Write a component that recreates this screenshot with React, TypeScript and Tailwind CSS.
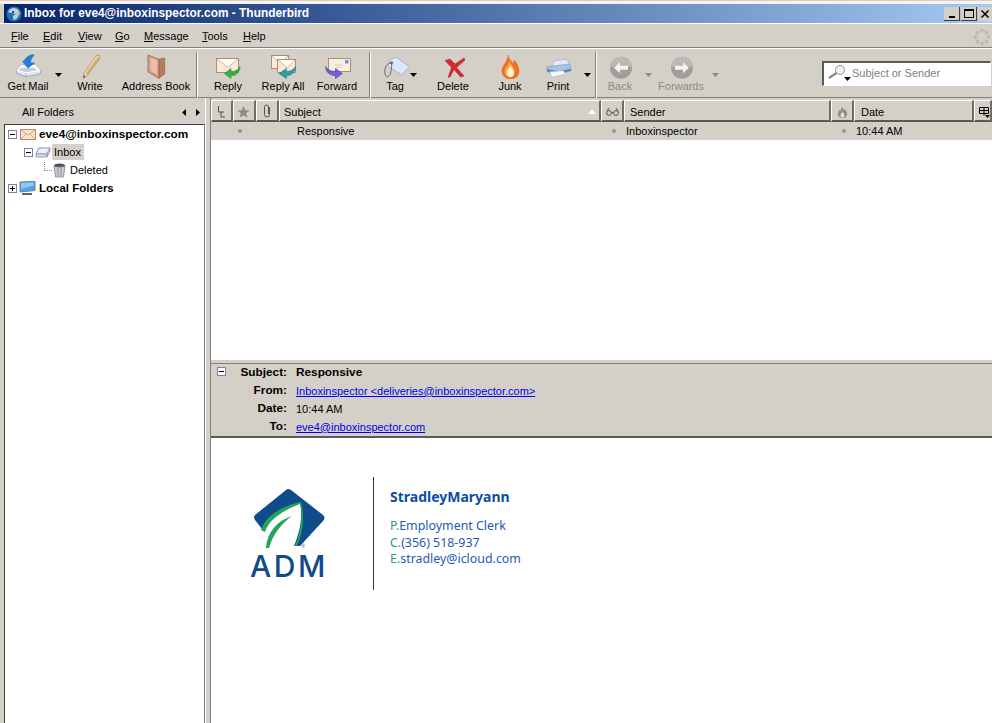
import React from "react";

const Caret = ({ color = "#000" }: { color?: string }) => (
  <svg width="7" height="4" viewBox="0 0 7 4">
    <path d="M0 0h7L3.500 4z" fill={color} />
  </svg>
);

const GetMailIcon = () => (
  <svg width="30" height="27" viewBox="0 0 30 27">
    <path d="M3.300 18.700L8.300 13h14.400l5 5.700-.7 3.300-14.300 2.700-9-3.400z" fill="#dfe6ef" stroke="#8b9ab0" strokeWidth="0.8" />
    <path d="M3.300 18.700l9.500 2.800 14.900-2.800-5-5.700H8.300z" fill="#fafbfc" />
    <path d="M8 16h14l2 2.300-11 2-7-2z" fill="#c3cedb" />
    <path d="M12.800 21.500v3.200" stroke="#8b9ab0" strokeWidth="0.8" />
    <path d="M20.500 2.500C16 3 12.500 5.500 11 9.200H9.300l5.700 7.100 6.700-5.600H17.300c.4-3 2-5.700 3.700-7.200z" fill="#1f7fe0" stroke="#1a62b8" strokeWidth="0.5" />
  </svg>
);

const WriteIcon = () => (
  <svg width="22" height="27" viewBox="0 0 22 27">
    <path d="M17.500 3.500L20.500 3l.5 3.500L8.500 23l-4.200 3.300.7-5.300z" fill="#ecd9a8" stroke="#a08b5e" strokeWidth="0.7" />
    <path d="M19 5L7 21.500l1.500 1.300L20.800 6z" fill="#c9a96a" />
    <path d="M4.300 26.300l.4-3 2 1.300z" fill="#5c5348" />
  </svg>
);

const BookIcon = () => (
  <svg width="20" height="27" viewBox="0 0 20 27">
    <path d="M13 7l5.700-1v16l-5.700 4.300z" fill="#b77a63" stroke="#94604b" strokeWidth="0.6" />
    <path d="M2 3l11 4.300v19L4.700 21.500 2 20z" fill="#d79d84" stroke="#94604b" strokeWidth="0.7" />
    <path d="M4.500 5.500l6.500 2.800v14l-6.500-3.500z" fill="#eabfa8" />
  </svg>
);

const Envelope = ({ x, y, w, h }: { x: number; y: number; w: number; h: number }) => (
  <g>
    <rect x={x + 0.5} y={y + 0.5} width={w} height={h} fill="#f8ecd9" stroke="#b08d6e" />
    <path d={`M${x + 1} ${y + 1}l${w / 2} ${h * 0.6} ${w / 2 - 1} ${-h * 0.6}`} fill="#fffdf8" stroke="#cfb49a" />
  </g>
);

const ReplyIcon = () => (
  <svg width="26" height="27" viewBox="0 0 26 27">
    <Envelope x={1} y={6} w={22} h={14} />
    <path d="M9.500 21.500l6.500-5v3c4 0 7-1.500 9-5 0 5.500-4 9.500-9 9v3z" fill="#3cab45" stroke="#2a8a33" strokeWidth="0.6" />
  </svg>
);

const ReplyAllIcon = () => (
  <svg width="26" height="27" viewBox="0 0 26 27">
    <Envelope x={1} y={3} w={17} h={13} />
    <Envelope x={7} y={7} w={18} h={13} />
    <path d="M9 21.500l7.500-5v3c4 0 7-1.500 9-5 0 5.500-4 9.500-9 9v3z" fill="#2b9ea8" stroke="#1f7c85" strokeWidth="0.6" />
  </svg>
);

const ForwardIcon = () => (
  <svg width="28" height="27" viewBox="0 0 28 27">
    <rect x="5.500" y="6.500" width="22" height="13" fill="#f9f0e1" stroke="#b08d6e" />
    <rect x="22" y="8" width="3.500" height="3.500" fill="#6f8fe0" />
    <path d="M12 13h8M13 15.500h5" stroke="#d9cab4" />
    <path d="M19.500 21.500l-7-5v3c-4 0-7.500-1.500-10-5 0 5.500 5 9.500 10 9v3z" fill="#7560cf" stroke="#52419f" strokeWidth="0.6" />
  </svg>
);

const TagIcon = () => (
  <svg width="28" height="27" viewBox="0 0 28 27">
    <path d="M9 7.300l6.700-2 12.300 9.400-7.300 8.300L7.300 14.700z" fill="#dbe7fa" stroke="#a3b5d2" />
    <circle cx="10.700" cy="10.700" r="1.500" fill="#6f7f99" />
    <path d="M10.700 10.700C6 11 3.500 15 3.800 20c.2 4 2 5.500 3.500 4.500 2.500-1.700 3.500-7 3.400-13.500" fill="none" stroke="#5b5b5b" strokeWidth="0.9" />
  </svg>
);

const DeleteIcon = () => (
  <svg width="24" height="27" viewBox="0 0 24 27">
    <path d="M4 8.500L9 7l5 5 9-6 1 2-8.500 7.500L23 24l-3.500 1-6.500-7.500L9 25l-2 .500 3.500-10z" fill="#d8282d" stroke="#b11a20" strokeWidth="0.5" />
  </svg>
);

const JunkIcon = () => (
  <svg width="20" height="27" viewBox="0 0 20 27">
    <path d="M8 3c1 5 4 6 5 9 1-1 1-3 1-4 3 3 5 7 5 11 0 5-4 8-8.500 8C6 27 2 24 2 19 2 13 8 10 8 3z" fill="#ef6f2a" stroke="#dd5a22" strokeWidth="0.5" />
    <path d="M9.500 8c.5 4 4 6 5 9 1 4-1 8.500-4 8.500S4.500 23 4.500 19.500C4.500 15 9 13 9.500 8z" fill="#fba43c" />
    <path d="M10.500 13c.5 3 3 4.500 3.500 7 .5 3-1.500 5-3.500 5s-4-1.500-4-4.500C6.500 17.500 10 16 10.500 13z" fill="#fff0cf" />
  </svg>
);

const PrintIcon = () => (
  <svg width="28" height="27" viewBox="0 0 28 27">
    <path d="M10.300 8.700l12.400-1.400 3.300 5.700-18.300 1.700z" fill="#e3ecf6" stroke="#8ea2ba" strokeWidth="0.6" />
    <path d="M2.700 14.700L26 12l1 6.700L15 22l-11.700-2.300z" fill="#a9c3e2" stroke="#7e98b8" strokeWidth="0.6" />
    <path d="M3 17l12 2.500L27 16.500v2.200L15 22l-11.700-2.300z" fill="#5d86bb" />
    <path d="M6 19.700l13.300-1 2.400 3.300-14 3.300z" fill="#f6f9fc" stroke="#a9b8c9" strokeWidth="0.6" />
  </svg>
);

const NavIcon = ({ dir }: { dir: "back" | "forward" }) => (
  <svg width="24" height="27" viewBox="0 0 24 27">
    <circle cx="13" cy="15.700" r="11" fill="#a09e9a" />
    <path d="M2 15.700a11 11 0 0 1 22 0c-4-3-18-3-22 0z" fill="#bbb9b5" />
    <path
      d={dir === "back" ? "M6 15.700l6-5.500v3.500h8v4h-8v3.500z" : "M20 15.700l-6-5.500v3.500H6v4h8v3.500z"}
      fill="#f3f2ef"
    />
  </svg>
);

const ToolButton = ({
  label,
  width,
  disabled,
  children,
}: {
  label: string;
  width: string;
  disabled?: boolean;
  children: React.ReactNode;
}) => (
  <div className={`flex flex-col items-center shrink-0 ${width}`}>
    <div className="h-[27px] mb-[1px] flex items-center justify-center">{children}</div>
    <span className={`leading-[13px] whitespace-nowrap ${disabled ? "text-[#8c8a85]" : "text-black"}`}>{label}</span>
  </div>
);

const ToolCaret = ({ width, color }: { width: string; color?: string }) => (
  <div className={`flex justify-center pt-[21px] h-full shrink-0 ${width}`}>
    <div>
      <Caret color={color} />
    </div>
  </div>
);

const ToolSep = () => <div className="h-[46px] w-[2px] shrink-0 border-l border-[#808080] bg-white self-center" />;

const TreeToggle = ({ plus }: { plus?: boolean }) => (
  <svg width="9" height="9" viewBox="0 0 9 9" className="shrink-0">
    <rect x="0.5" y="0.5" width="8" height="8" fill="#fff" stroke="#7f7fb0" />
    <path d="M2 4.500h5" stroke="#000" />
    {plus && <path d="M4.500 2v5" stroke="#000" />}
  </svg>
);

const HeaderCell = ({ width, children }: { width: string; children?: React.ReactNode }) => (
  <div className={`h-[22px] pt-[3px] flex items-center shrink-0 border-t border-l border-white border-r-2 border-b-2 border-r-[#6f6d68] border-b-[#5c5a56] ${width}`}>
    {children}
  </div>
);

function Dot() {
  return <div className="w-[4px] h-[4px] rounded-full bg-[#9a9892]" />;
}

export default function App() {
  return (
    <div
      className="w-[992px] h-[723px] overflow-hidden flex flex-col bg-[#d4d0c8] text-[11px] text-black"
      style={{ fontFamily: '"Liberation Sans", Tahoma, sans-serif' }}
    >
      {/* title bar */}
      <div className="h-[4px] shrink-0 border-t border-[#d4d0c8] bg-[#f4f3f0]" />
      <div className="ml-[4px] h-[19px] shrink-0 flex items-center bg-gradient-to-r from-[#0a246a] to-[#a6caf0]">
        <svg width="16" height="16" viewBox="0 0 16 16" className="ml-[2px] shrink-0">
          <circle cx="8" cy="8" r="7.500" fill="#2a6fb0" />
          <path d="M2 6c2-5 9-5 11-1 1 3-1 8-5 9-2-3-1-5 2-6-3-1-6-1-8-2z" fill="#b9cfe4" />
          <circle cx="7" cy="6" r="1" fill="#10253f" />
          <path d="M11 6l4 1-3 2z" fill="#f0c040" />
        </svg>
        <span className="ml-[2px] text-white font-bold text-[11.900px] whitespace-nowrap">Inbox for eve4@inboxinspector.com - Thunderbird</span>
        <div className="ml-auto flex items-center gap-[1px]">
          <div className="w-[16px] h-[14px] bg-[#d4d0c8] border-r border-b border-[#404040] flex items-end justify-center pb-[2px]">
            <div className="w-[6px] h-[2px] bg-black" />
          </div>
          <div className="w-[16px] h-[14px] bg-[#d4d0c8] border-r border-b border-[#404040] flex items-center justify-center">
            <div className="w-[10px] h-[9px] border border-t-2 border-black" />
          </div>
          <div className="w-[14px] h-[14px] bg-[#d4d0c8] flex items-center justify-center">
            <svg width="8" height="8" viewBox="0 0 8 8">
              <path d="M0.500 0.500l7 7M7.500 0.500l-7 7" stroke="#000" strokeWidth="1.500" />
            </svg>
          </div>
        </div>
      </div>
      <div className="h-[1px] shrink-0 bg-white" />

      {/* menu bar */}
      <div className="h-[24px] shrink-0 flex items-center pl-[11px] pt-[2px] border-b border-[#808080]">
        <span className="w-[32px]"><u>F</u>ile</span>
        <span className="w-[35px]"><u>E</u>dit</span>
        <span className="w-[37px]"><u>V</u>iew</span>
        <span className="w-[29px]"><u>G</u>o</span>
        <span className="w-[58px]"><u>M</u>essage</span>
        <span className="w-[41px]"><u>T</u>ools</span>
        <span><u>H</u>elp</span>
        <svg width="18" height="18" viewBox="0 0 18 18" className="ml-auto mr-[1px]" fill="#bdbab3">
          <circle cx="9" cy="2.500" r="2" />
          <circle cx="13.600" cy="4.400" r="2" />
          <circle cx="15.500" cy="9" r="2" />
          <circle cx="13.600" cy="13.600" r="2" />
          <circle cx="9" cy="15.500" r="2" />
          <circle cx="4.400" cy="13.600" r="2" />
          <circle cx="2.500" cy="9" r="2" />
          <circle cx="4.400" cy="4.400" r="2" />
        </svg>
      </div>

      {/* toolbar */}
      <div className="h-[50px] shrink-0 flex items-start pl-[4px] border-t border-white border-b border-b-[#808080] pt-[3px]">
        <ToolButton label="Get Mail" width="w-[48px]"><GetMailIcon /></ToolButton>
        <ToolCaret width="w-[12px]" />
        <ToolButton label="Write" width="w-[52px]"><WriteIcon /></ToolButton>
        <ToolButton label="Address Book" width="w-[80px]"><BookIcon /></ToolButton>
        <ToolSep />
        <ToolButton label="Reply" width="w-[60px]"><ReplyIcon /></ToolButton>
        <ToolButton label="Reply All" width="w-[50px]"><ReplyAllIcon /></ToolButton>
        <ToolButton label="Forward" width="w-[58px]"><ForwardIcon /></ToolButton>
        <div className="w-[3px] shrink-0" />
        <ToolSep />
        <div className="relative">
          <ToolButton label="Tag" width="w-[48px]"><TagIcon /></ToolButton>
          <div className="absolute left-[39px] top-[21px]"><Caret /></div>
        </div>
        <ToolButton label="Delete" width="w-[68px]"><DeleteIcon /></ToolButton>
        <ToolButton label="Junk" width="w-[46px]"><JunkIcon /></ToolButton>
        <ToolButton label="Print" width="w-[50px]"><PrintIcon /></ToolButton>
        <ToolCaret width="w-[9px]" />
        <div className="w-[3px] shrink-0" />
        <ToolSep />
        <ToolButton label="Back" width="w-[46px]" disabled><NavIcon dir="back" /></ToolButton>
        <ToolCaret width="w-[10px]" color="#8c8a85" />
        <ToolButton label="Forwards" width="w-[56px]" disabled><NavIcon dir="forward" /></ToolButton>
        <ToolCaret width="w-[12px]" color="#8c8a85" />
        <div className="ml-auto mt-[9px] mr-[1px] w-[169px] h-[25px] pb-[2px] bg-white flex items-center border-t-2 border-l-2 border-t-[#5a5a5a] border-l-[#5a5a5a] border-b border-r border-b-white border-r-white">
          <div className="relative ml-[3px] w-[25px] h-[18px] shrink-0">
            <svg width="20" height="16" viewBox="0 0 20 16">
              <circle cx="13" cy="6" r="4.500" fill="#eef3f8" stroke="#8b95a1" />
              <path d="M9.500 9L2 14" stroke="#8f8b85" strokeWidth="2.500" />
            </svg>
            <div className="absolute left-[17px] top-[13px]"><Caret /></div>
          </div>
          <span className="text-[#7d7d7d] whitespace-nowrap">Subject or Sender</span>
        </div>
      </div>

      {/* main area */}
      <div className="flex-1 flex min-h-0">
        {/* folder pane */}
        <div className="w-[205px] shrink-0 flex flex-col">
          <div className="h-[26px] shrink-0 flex items-center pl-[22px] pr-[5px] pt-[2px]">
            <span>All Folders</span>
            <svg width="18" height="7" viewBox="0 0 18 7" className="ml-auto">
              <path d="M0 3.500L4 0v7zM18 3.500L14 0v7z" fill="#000" />
            </svg>
          </div>
          <div className="ml-[4px] flex-1 bg-white border-t border-l border-[#404040] border-r border-r-[#808080]">
            <div className="h-[18px] flex items-center pl-[3px]">
              <TreeToggle />
              <svg width="16" height="11" viewBox="0 0 16 11" className="ml-[3px] shrink-0">
                <rect x="0.500" y="0.500" width="15" height="10" fill="#f7e3d2" stroke="#c08a68" />
                <path d="M1 1l7 5 7-5M1 10l5-5M15 10l-5-5" fill="none" stroke="#d2a283" />
              </svg>
              <span className="ml-[3px] pt-[1px] font-bold text-[11.800px] whitespace-nowrap">eve4@inboxinspector.com</span>
            </div>
            <div className="h-[18px] flex items-center pl-[19px]">
              <TreeToggle />
              <svg width="16" height="11" viewBox="0 0 16 11" className="ml-[2px] shrink-0">
                <path d="M4 1h11l-3 6H1z" fill="#eef2f7" stroke="#8595ad" />
                <path d="M1 7h11v3H1zM12 7l3-6v3l-3 6z" fill="#d6deea" stroke="#8595ad" strokeWidth="0.8" />
              </svg>
              <span className="ml-[1px] bg-[#d4d0c8] w-[32px] pl-[2px] h-[16px] leading-[16px]">Inbox</span>
            </div>
            <div className="h-[18px] flex items-center pl-[39px]">
              <div className="w-[8px] h-[9px] mb-[8px] border-l border-b border-dotted border-[#808080] shrink-0" />
              <svg width="13" height="15" viewBox="0 0 13 15" className="ml-[1px] shrink-0">
                <ellipse cx="6.500" cy="2.500" rx="5.500" ry="2" fill="#555" />
                <path d="M1 3l1.500 11h8L12 3c-2 1.500-9 1.500-11 0z" fill="#c9cdd2" stroke="#70757c" strokeWidth="0.7" />
                <path d="M5 5v8M8 5v8" stroke="#8d9298" />
              </svg>
              <span className="ml-[4px]">Deleted</span>
            </div>
            <div className="h-[18px] flex items-center pl-[3px]">
              <TreeToggle plus />
              <svg width="17" height="15" viewBox="0 0 17 15" className="ml-[2px] shrink-0">
                <path d="M1 1l15-0.500v9L1 11z" fill="#4aa5ec" stroke="#6c8299" />
                <path d="M2 2l13-.500v3L2 8z" fill="#8cc8f2" />
                <path d="M3 12h10v2H3z" fill="#5b6570" />
              </svg>
              <span className="ml-[3px] pt-[1px] font-bold text-[11.500px] whitespace-nowrap">Local Folders</span>
            </div>
          </div>
        </div>

        {/* splitter */}
        <div className="w-[6px] shrink-0 border-l border-white border-r border-r-[#808080]" />

        {/* right pane */}
        <div className="flex-1 min-w-0 flex flex-col">
          <div className="flex pt-[2px] shrink-0">
            <HeaderCell width="w-[22px]">
              <svg width="8" height="12" viewBox="0 0 8 12" className="ml-[5px]">
                <path d="M1.500 0v6h2.500v5h4M4 6h3" fill="none" stroke="#55534e" />
              </svg>
            </HeaderCell>
            <HeaderCell width="w-[23px]">
              <svg width="13" height="12" viewBox="0 0 13 12" className="ml-[3px]">
                <path d="M6.500 0l1.700 4.200 4.500.3-3.500 2.800 1.200 4.400-3.900-2.500-3.900 2.500 1.200-4.400L.3 4.500l4.500-.3z" fill="#8f8d88" />
              </svg>
            </HeaderCell>
            <HeaderCell width="w-[23px]">
              <svg width="8" height="14" viewBox="0 0 8 14" className="ml-[6px] -mt-[2px]">
                <path d="M6.500 3v7.500a2.500 2.500 0 0 1-5 0V3a2 2 0 0 1 4 0v7" fill="none" stroke="#55534e" />
              </svg>
            </HeaderCell>
            <HeaderCell width="w-[322px]">
              <span className="ml-[4px]">Subject</span>
              <svg width="8" height="5" viewBox="0 0 8 5" className="ml-auto mr-[3px] -mt-[2px]">
                <path d="M0 5l4-5 4 5z" fill="#fff" />
              </svg>
            </HeaderCell>
            <HeaderCell width="w-[23px]">
              <svg width="13" height="8" viewBox="0 0 13 8" className="ml-[4px]">
                <circle cx="3" cy="5" r="2.400" fill="none" stroke="#55534e" />
                <circle cx="10" cy="5" r="2.400" fill="none" stroke="#55534e" />
                <path d="M5.400 4.500h2.200M1 3l2-3M12 3l-2-3" fill="none" stroke="#55534e" />
              </svg>
            </HeaderCell>
            <HeaderCell width="w-[207px]"><span className="ml-[5px]">Sender</span></HeaderCell>
            <HeaderCell width="w-[23px]">
              <svg width="9" height="12" viewBox="0 0 9 12" className="ml-[6px] -mt-[1px]">
                <path d="M4 0c0 2 1 2 2 4l1-1c1 2 2 3 2 5 0 3-2 4-4.500 4S0 11 0 8c0-2 1-3 1.500-4l1 1z" fill="#8f8d88" />
                <path d="M4.500 5c0 2 2 2.500 2 4.500 0 1.500-1 2-2 2s-2-.5-2-2c0-2 2-2.500 2-4.500z" fill="#e4e2dc" />
              </svg>
            </HeaderCell>
            <HeaderCell width="w-[120px]"><span className="ml-[6px]">Date</span></HeaderCell>
            <HeaderCell width="w-[18px]">
              <svg width="11" height="11" viewBox="0 0 11 11" className="ml-[4px]">
                <path d="M0.500 0.500h9v6h-9zM0.500 3.500h9M5 0.500v8" fill="none" stroke="#000" />
                <path d="M6 8h5l-2.500 3z" fill="#000" />
              </svg>
            </HeaderCell>
          </div>
          <div className="h-[18px] shrink-0 flex items-center bg-[#d4d0c8]">
            <div className="w-[86px] shrink-0 flex justify-end pr-[55px]"><Dot /></div>
            <span className="w-[315px] shrink-0">Responsive</span>
            <div className="w-[14px] shrink-0"><Dot /></div>
            <span className="w-[216px] shrink-0">Inboxinspector</span>
            <div className="w-[14px] shrink-0"><Dot /></div>
            <span>10:44 AM</span>
          </div>
          <div className="flex-1 bg-white min-h-0" />
          <div className="h-[5px] shrink-0 border-t border-white border-b border-b-[#808080]" />
          <div className="h-[74px] shrink-0 border-b-2 border-[#5c5a56]">
            <div className="grid grid-cols-[76px_1fr] gap-x-[9px] auto-rows-[18px] items-center">
              <div className="relative text-right font-bold text-[11.800px]">
                <div className="absolute left-[6px] top-[3px]"><TreeToggle /></div>
                Subject:
              </div>
              <div className="font-bold text-[11.800px]">Responsive</div>
              <div className="text-right font-bold text-[11.800px]">From:</div>
              <a className="text-[#0000ee] underline whitespace-pre">Inboxinspector &lt;deliveries@inboxinspector.com&gt;</a>
              <div className="text-right font-bold text-[11.800px]">Date:</div>
              <div>10:44 AM</div>
              <div className="text-right font-bold text-[11.800px]">To:</div>
              <a className="text-[#0000ee] underline">eve4@inboxinspector.com</a>
            </div>
          </div>

          {/* message body */}
          <div className="h-[285px] shrink-0 bg-white pt-[39px] flex items-start font-['Noto_Sans']">
            <div className="relative ml-[39px] mt-[10px] w-[78px] shrink-0 flex flex-col items-center">
              <svg width="78" height="68" viewBox="0 0 78 68">
                <path d="M36 3Q38 1 41 3L73 28Q76 31 73 34L50 59H44C50 45 53 30 50 16 33 20 17 28 12 42L5 33Q3 30 5 28Z" fill="#0f4c8a" />
                <path d="M50 15C33 19 16 28 11 43L15 45C19 32 34 23 50 17Z" fill="#22a559" />
                <path d="M50 15C53 30 51 45 45 59L47 59C53 45 55 30 51 15Z" fill="#22a559" />
                <path d="M16 61C17 45 27 34 42 29 32 36 23 47 19 61Z" fill="#22a559" />
              </svg>
              <span className="text-[30px] leading-[22px] font-medium text-[#0f4c8a] tracking-[2.500px] font-['Inter']">
                ADM
              </span>
              <span className="absolute left-[51px] top-[57px] text-[5px] leading-[5px] text-[#5a7ea8]">®</span>
            </div>
            <div className="ml-[45px] w-[1px] h-[113px] bg-[#333] shrink-0" />
            <div className="ml-[16px] pt-[10px] text-[#1c5bb5] text-[12.400px] leading-[16.500px]">
              <div className="font-bold text-[14px] text-[#0b4ea2] leading-[20px] mb-[11px]">StradleyMaryann</div>
              <div><span className="text-[#2e9a6a]">P.</span>Employment Clerk</div>
              <div><span className="text-[#2e9a6a]">C.</span>(356) 518-937</div>
              <div><span className="text-[#2e9a6a]">E.</span>stradley@icloud.com</div>
            </div>
          </div>
        </div>
      </div>
    </div>
  );
}
